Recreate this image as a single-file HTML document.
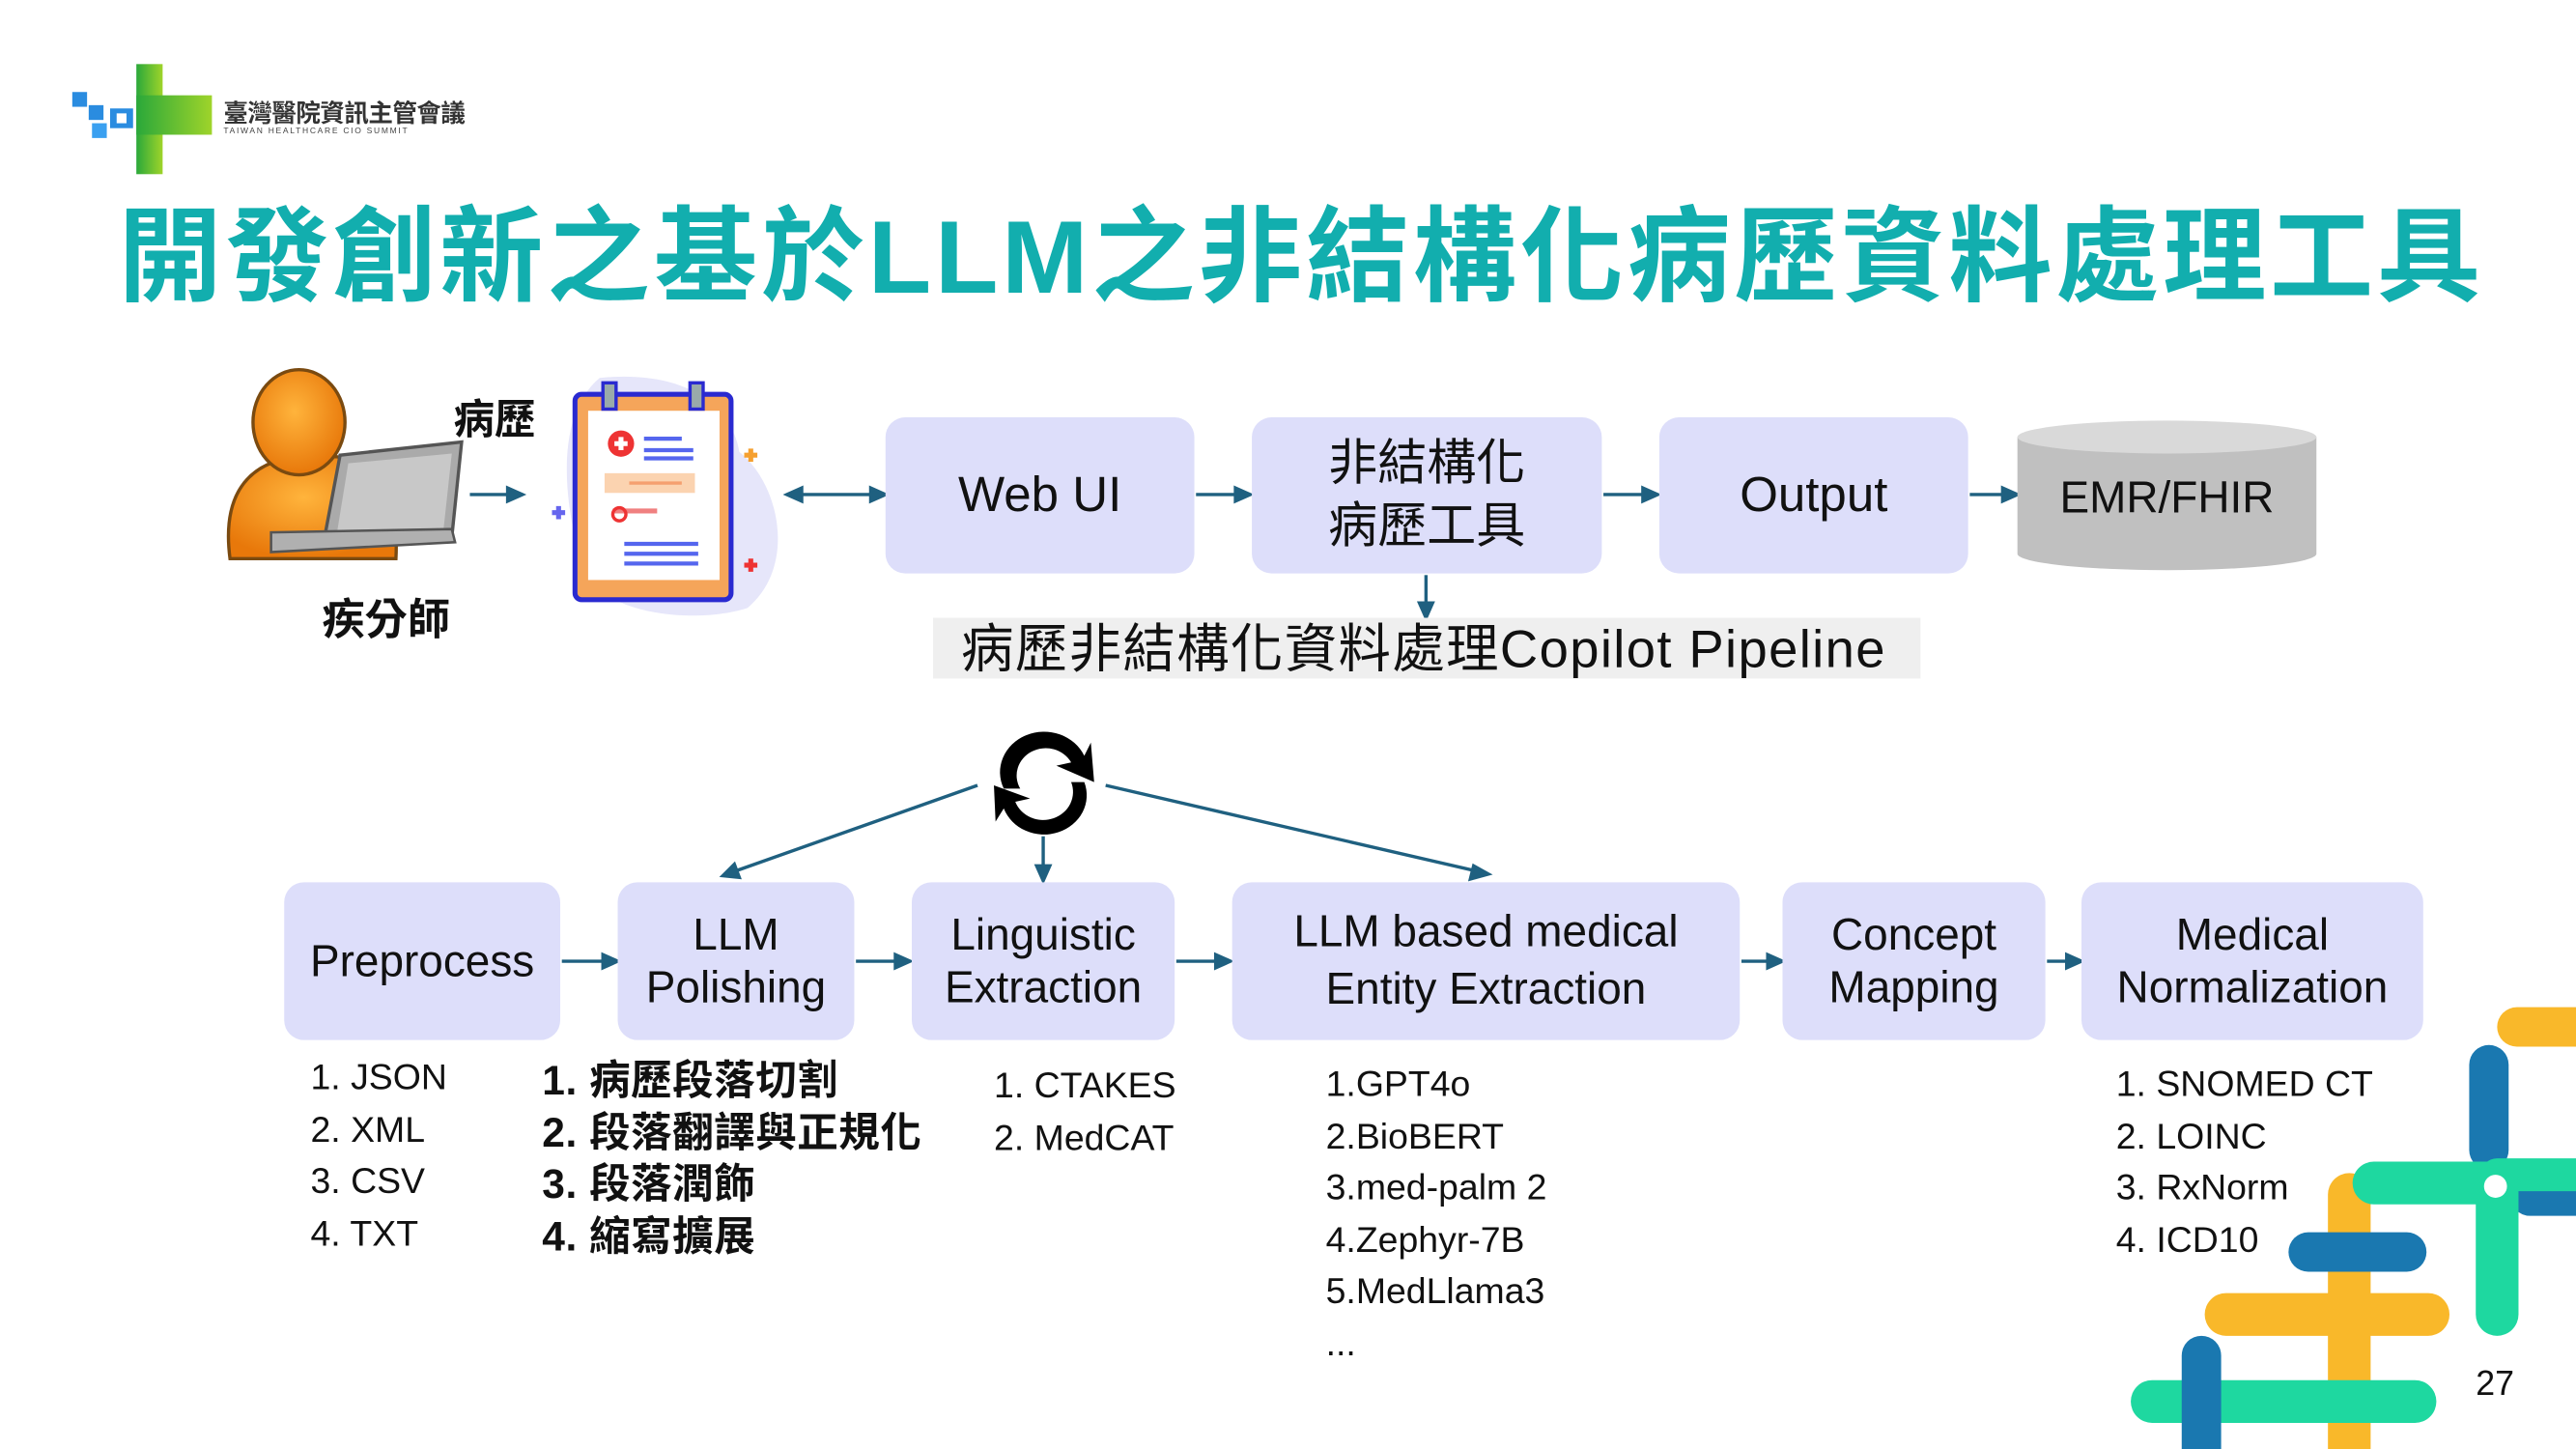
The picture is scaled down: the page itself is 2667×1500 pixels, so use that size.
<!DOCTYPE html>
<html><head><meta charset="utf-8"><style>
html,body{margin:0;padding:0;background:#fff;overflow:hidden}
#w{width:1568px;height:882px;position:relative;transform:scale(1.70089);transform-origin:0 0;font-family:"Liberation Sans","Noto Sans CJK TC",sans-serif;color:#111}
.a{position:absolute}
.box{position:absolute;background:#dddefa;border-radius:12px;display:flex;align-items:center;justify-content:center;text-align:center;font-size:27px;line-height:32px;color:#111}
.list{position:absolute;font-size:22px;line-height:31.5px;white-space:nowrap}
</style></head><body><div id="w">
<svg class="a" style="left:40px;top:36px" width="95" height="72" viewBox="0 0 95 72">
<defs><linearGradient id="g" x1="0" x2="1"><stop offset="0" stop-color="#2aa83a"/><stop offset="1" stop-color="#9fd42a"/></linearGradient></defs>
<rect x="43" y="3" width="16" height="67" fill="url(#g)"/><rect x="43" y="22" width="46" height="24" fill="url(#g)"/>
<rect x="4" y="20" width="9" height="9" fill="#2a8ce0"/><rect x="14" y="28" width="9" height="9" fill="#2a8ce0"/>
<rect x="16" y="39" width="9" height="9" fill="#3aa0f0"/><rect x="27" y="30" width="14" height="12" fill="#2a8ce0"/><rect x="31" y="33" width="6" height="6" fill="#fff"/>
</svg>
<div class="a" style="left:136px;top:58px;font-size:15px;font-weight:bold;color:#333;letter-spacing:-0.3px">臺灣醫院資訊主管會議</div>
<div class="a" style="left:136px;top:77px;font-size:5px;color:#444;letter-spacing:1px">TAIWAN HEALTHCARE CIO SUMMIT</div>
<div class="a" style="left:72px;top:118px;font-size:63px;line-height:78px;font-weight:bold;color:#12aeae;white-space:nowrap;letter-spacing:2.2px">開發創新之基於LLM之非結構化病歷資料處理工具</div>
<svg class="a" style="left:135px;top:222px" width="160" height="135" viewBox="0 0 160 135">
<defs><radialGradient id="o" cx="0.45" cy="0.4" r="0.6"><stop offset="0" stop-color="#ffb43c"/><stop offset="1" stop-color="#e8780a"/></radialGradient></defs>
<path d="M5 118 C0 80 15 60 45 56 L70 56 C95 60 108 80 106 118 Z" fill="url(#o)" stroke="#7a4a10" stroke-width="2"/>
<ellipse cx="47" cy="35" rx="28" ry="32" fill="url(#o)" stroke="#7a4a10" stroke-width="2"/>
<path d="M72 55 L146 47 L140 105 L62 108 Z" fill="#aaa" stroke="#555" stroke-width="2"/>
<path d="M77 60 L140 54 L135 100 L70 103 Z" fill="#c8c8c8"/>
<path d="M30 102 L140 100 L142 108 L30 114 Z" fill="#b0b0b0" stroke="#555" stroke-width="1.5"/>
</svg>
<div class="a" style="left:276px;top:236px;font-size:25px;font-weight:bold">病歷</div>
<div class="a" style="left:196px;top:357px;font-size:26px;font-weight:bold">疾分師</div>
<svg class="a" style="left:325px;top:225px" width="160" height="155" viewBox="0 0 160 155">
<path d="M40 5 C90 0 120 20 125 50 C150 70 160 120 130 145 C100 155 40 150 30 120 C20 90 10 30 40 5Z" fill="#e6e6fa"/>
<rect x="25" y="15" width="95" height="125" rx="4" fill="#f5a55a" stroke="#2a2ad0" stroke-width="3"/>
<rect x="33" y="25" width="80" height="103" fill="#fff"/>
<rect x="42" y="8" width="8" height="16" fill="#9aa" stroke="#2a2ad0" stroke-width="2"/><rect x="95" y="8" width="8" height="16" fill="#9aa" stroke="#2a2ad0" stroke-width="2"/>
<circle cx="53" cy="45" r="8" fill="#e33"/><path d="M49 45h8M53 41v8" stroke="#fff" stroke-width="3"/>
<path d="M67 42h23M67 49h30M67 54h30" stroke="#5566ee" stroke-width="2.5"/>
<rect x="43" y="63" width="55" height="12" fill="#fbd3b0"/><path d="M58 69h32" stroke="#f5a070" stroke-width="2"/>
<path d="M48 86h27" stroke="#f08080" stroke-width="3"/><circle cx="52" cy="88" r="4" fill="none" stroke="#e33" stroke-width="2"/>
<path d="M55 106h45M55 112h45M55 118h45" stroke="#5566ee" stroke-width="2.5"/>
<path d="M132 48l0 8M128 52l8 0" stroke="#f5a030" stroke-width="3"/>
<path d="M132 115l0 8M128 119l8 0" stroke="#e33" stroke-width="3"/>
<path d="M15 83l0 8M11 87l8 0" stroke="#6666ee" stroke-width="3"/>
</svg>
<svg class="a" style="left:0;top:0" width="1568" height="882" viewBox="0 0 1568 882">
<g stroke="#1f6080" stroke-width="2" fill="#1f6080">
<line x1="286" y1="301" x2="310" y2="301"/><path d="M318 301l-9-4v8z"/>
<line x1="487" y1="301" x2="531" y2="301"/><path d="M479 301l9-4v8z"/><path d="M539 301l-9-4v8z"/>
<line x1="728" y1="301" x2="753" y2="301"/><path d="M761 301l-9-4v8z"/>
<line x1="976" y1="301" x2="1001" y2="301"/><path d="M1009 301l-9-4v8z"/>
<line x1="1199" y1="301" x2="1220" y2="301"/><path d="M1228 301l-9-4v8z"/>
<line x1="868" y1="350" x2="868" y2="368"/><path d="M868 376l-4-9h8z"/>
<line x1="342" y1="585" x2="368" y2="585"/><path d="M376 585l-9-4v8z"/>
<line x1="521" y1="585" x2="546" y2="585"/><path d="M554 585l-9-4v8z"/>
<line x1="716" y1="585" x2="741" y2="585"/><path d="M749 585l-9-4v8z"/>
<line x1="1060" y1="585" x2="1077" y2="585"/><path d="M1085 585l-9-4v8z"/>
<line x1="1246" y1="585" x2="1259" y2="585"/><path d="M1267 585l-9-4v8z"/>
<line x1="595" y1="478" x2="448" y2="530"/><path d="M440 533l7-7 3 8z"/>
<line x1="635" y1="509" x2="635" y2="528"/><path d="M635 536l-4-9h8z"/>
<line x1="673" y1="478" x2="898" y2="530"/><path d="M906 532l-9-5-2 8z"/>
</g>
<g fill="#000">
<path d="M611 480 A25 23 0 0 1 660 460 L664 452 L666 476 L643 466 L652 464 A17 16 0 0 0 621 480 Z"/>
<path d="M660 476 A25 23 0 0 1 611 492 L606 500 L605 478 L627 486 L618 488 A17 16 0 0 0 652 476 Z"/>
</g>
<path d="M1228 266 L1228 337 A91 10 0 0 0 1410 337 L1410 266 Z" fill="#c0c0c0"/>
<ellipse cx="1319" cy="266" rx="91" ry="10" fill="#d9d9d9"/>
<g stroke-linecap="round" fill="none">
<line x1="1532" y1="625" x2="1580" y2="625" stroke="#f9b82a" stroke-width="24"/>
<line x1="1430" y1="727" x2="1430" y2="890" stroke="#f9b82a" stroke-width="26"/>
<line x1="1355" y1="800" x2="1478" y2="800" stroke="#f9b82a" stroke-width="26"/>
<line x1="1515" y1="648" x2="1515" y2="700" stroke="#1a78b0" stroke-width="24"/>
<line x1="1540" y1="728" x2="1580" y2="728" stroke="#1a78b0" stroke-width="24"/>
<line x1="1405" y1="762" x2="1465" y2="762" stroke="#1a78b0" stroke-width="24"/>
<line x1="1445" y1="720" x2="1520" y2="720" stroke="#1ed8a0" stroke-width="26"/>
<line x1="1520" y1="720" x2="1520" y2="800" stroke="#1ed8a0" stroke-width="26"/>
<line x1="1520" y1="715" x2="1580" y2="715" stroke="#1ed8a0" stroke-width="20"/>
<line x1="1310" y1="853" x2="1470" y2="853" stroke="#1ed8a0" stroke-width="26"/>
<line x1="1340" y1="825" x2="1340" y2="890" stroke="#1a78b0" stroke-width="24"/>
</g>
<circle cx="1519" cy="722" r="7" fill="#fff"/>
</svg>
<div class="box" style="left:539px;top:254px;width:188px;height:95px;font-size:30px">Web UI</div>
<div class="box" style="left:762px;top:254px;width:213px;height:95px;font-size:30px;line-height:38px">非結構化<br>病歷工具</div>
<div class="box" style="left:1010px;top:254px;width:188px;height:95px;font-size:30px">Output</div>
<div class="a" style="left:1228px;top:288px;width:182px;text-align:center;font-size:27px">EMR/FHIR</div>
<div class="a" style="left:568px;top:376px;width:601px;height:37px;background:#efefef"></div>
<div class="a" style="left:585px;top:375px;font-size:32px;line-height:40px;white-space:nowrap;letter-spacing:0.8px">病歷非結構化資料處理Copilot Pipeline</div>
<div class="box" style="left:173px;top:537px;width:168px;height:96px">Preprocess</div>
<div class="box" style="left:376px;top:537px;width:144px;height:96px">LLM<br>Polishing</div>
<div class="box" style="left:555px;top:537px;width:160px;height:96px">Linguistic<br>Extraction</div>
<div class="box" style="left:750px;top:537px;width:309px;height:96px;line-height:35px">LLM based medical<br>Entity Extraction</div>
<div class="box" style="left:1085px;top:537px;width:160px;height:96px">Concept<br>Mapping</div>
<div class="box" style="left:1267px;top:537px;width:208px;height:96px">Medical<br>Normalization</div>
<div class="list" style="left:189px;top:640px">1. JSON<br>2. XML<br>3. CSV<br>4. TXT</div>
<div class="list" style="left:330px;top:643px;font-size:25px;font-weight:bold;line-height:31.5px;letter-spacing:0.3px">1. 病歷段落切割<br>2. 段落翻譯與正規化<br>3. 段落潤飾<br>4. 縮寫擴展</div>
<div class="list" style="left:605px;top:645px">1. CTAKES<br>2. MedCAT</div>
<div class="list" style="left:807px;top:644px">1.GPT4o<br>2.BioBERT<br>3.med-palm 2<br>4.Zephyr-7B<br>5.MedLlama3<br>...</div>
<div class="list" style="left:1288px;top:644px">1. SNOMED CT<br>2. LOINC<br>3. RxNorm<br>4. ICD10</div>
<div class="a" style="left:1507px;top:831px;font-size:21px">27</div>
</div></body></html>
